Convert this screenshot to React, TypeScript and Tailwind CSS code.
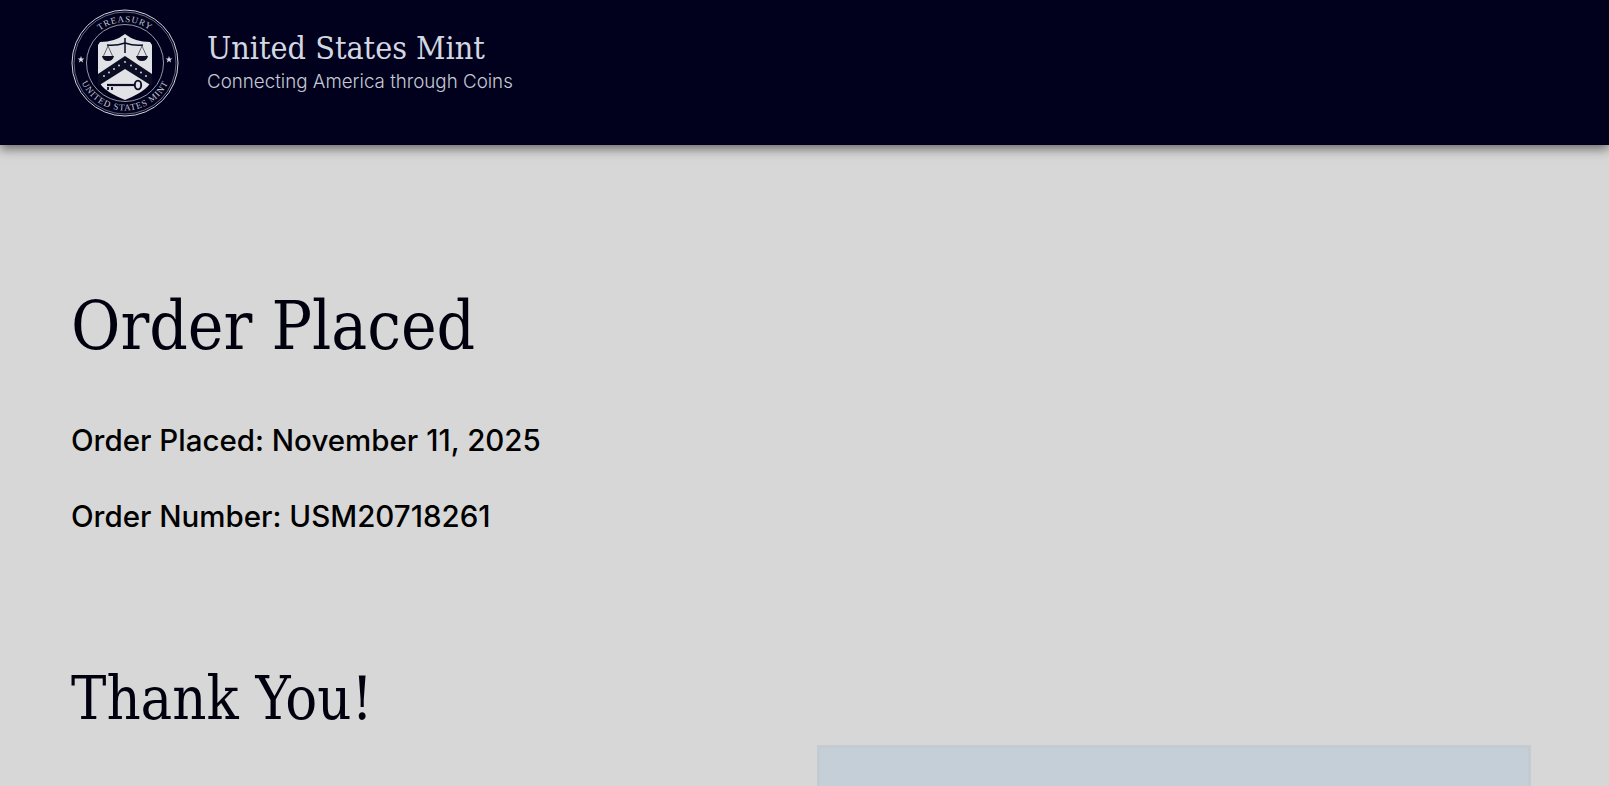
import React from 'react';

const slab = "font-['DejaVu_Serif_Condensed','DejaVu_Serif',serif]";
const sans = "font-['Inter','Open_Sans',sans-serif]";

function MintSeal() {
  return (
    <svg viewBox="0 0 108 108" className="h-[108px] w-[108px] shrink-0" fill="none">
      <defs>
        <path id="sealTop" d="M 54 54 m -41 0 a 41 41 0 0 1 82 0" />
        <path id="sealBottom" d="M 54 54 m -47.5 0 a 47.5 47.5 0 0 0 95 0" />
      </defs>
      <circle cx="54" cy="54" r="53" stroke="#d3d7df" strokeWidth="1" />
      <circle cx="54" cy="54" r="51" stroke="#c9ced8" strokeWidth="0.5" />
      <circle cx="54" cy="54" r="38.5" stroke="#d3d7df" strokeWidth="0.7" />
      <text fontFamily="Liberation Serif" fontSize="9" fill="#c2c7d2" letterSpacing="0.9">
        <textPath href="#sealTop" startOffset="50%" textAnchor="middle">TREASURY</textPath>
      </text>
      <text fontFamily="Liberation Serif" fontSize="9" fill="#c2c7d2" letterSpacing="0.9">
        <textPath href="#sealBottom" startOffset="50%" textAnchor="middle">UNITED STATES MINT</textPath>
      </text>
      <path d="M10 47l.9 2.4 2.5.1-2 1.5.7 2.4-2.1-1.4-2.1 1.4.7-2.4-2-1.5 2.5-.1z" fill="#d8dce3" />
      <path d="M98 47l.9 2.4 2.5.1-2 1.5.7 2.4-2.1-1.4-2.1 1.4.7-2.4-2-1.5 2.5-.1z" fill="#d8dce3" />
      {/* shield */}
      <path d="M29 33 Q44 33 54 25 Q64 33 79 33 L81 36 V68 Q81 80 54 91 Q27 80 27 68 V36 Z" fill="#e0e2e6" />
      {/* chevron */}
      <path d="M27 65 L54 47 L81 65 V77 L54 60 L27 77 Z" fill="#0b0d24" />
      <g fill="#e0e2e6">
        <circle cx="33" cy="67" r="0.9" /><circle cx="38" cy="63.5" r="0.9" /><circle cx="43" cy="60" r="0.9" /><circle cx="48" cy="56.5" r="0.9" /><circle cx="54" cy="53" r="0.9" />
        <circle cx="60" cy="56.5" r="0.9" /><circle cx="65" cy="60" r="0.9" /><circle cx="70" cy="63.5" r="0.9" /><circle cx="75" cy="67" r="0.9" />
      </g>
      {/* scales */}
      <g stroke="#0b0d24" strokeWidth="1.5">
        <path d="M36 36 Q45 37 54 34 Q63 37 72 36" />
        <path d="M54 29 V44" />
      </g>
      <g stroke="#0b0d24" strokeWidth="0.6">
        <path d="M37 37 L32 48 M37 37 L42 48 M71 37 L66 48 M71 37 L76 48" />
      </g>
      <path d="M31 47 H43 Q42 52 37 52 Q32 52 31 47Z M65 47 H77 Q76 52 71 52 Q66 52 65 47Z" fill="#0b0d24" />
      {/* key */}
      <g stroke="#0b0d24" fill="none">
        <path d="M36 76 H63" strokeWidth="2.2" />
        <path d="M37 78 V81 M41 78 V81" strokeWidth="1.8" />
        <ellipse cx="67" cy="76" rx="3.2" ry="4.4" strokeWidth="1.9" />
      </g>
    </svg>
  );
}

export default function App() {
  return (
    <div className="h-[786px] overflow-hidden bg-[#d7d7d7]">
      {/* Header */}
      <header className="flex h-[145px] items-start gap-7 bg-[#01011e] pl-[71px] pt-[9px] shadow-[0_4px_10px_rgba(0,0,0,0.5)]">
        <MintSeal />
        <div className="pt-[21px]">
          <div className={`${slab} text-[32px] leading-[36px] text-[#d3d7e0]`}>United States Mint</div>
          <div className={`${sans} mt-[3px] text-[18.75px] leading-[26px] font-light text-[#c6cad4]`}>Connecting America through Coins</div>
        </div>
      </header>

      {/* Order summary */}
      <main className="pl-[71px] pr-[78px] pt-[139px]">
        <h1 className={`${slab} text-[67px] leading-[84px] text-[#00000f]`}>Order Placed</h1>
        <p className={`${sans} mt-[54px] text-[29.5px] leading-[36px] font-medium text-black`}>Order Placed: November 11, 2025</p>
        <p className={`${sans} mt-[40px] text-[29.5px] leading-[36px] font-medium text-black`}>Order Number: USM20718261</p>
        <h2 className={`${slab} mt-[129px] text-[59px] leading-[72px] text-[#00000f]`}>Thank You!</h2>
        <div className="mt-[10px] flex justify-end">
          <div className="h-[100px] w-[714px] border-[3px] border-[#c4ccd2] bg-[#c5cfd8]" />
        </div>
      </main>
    </div>
  );
}
